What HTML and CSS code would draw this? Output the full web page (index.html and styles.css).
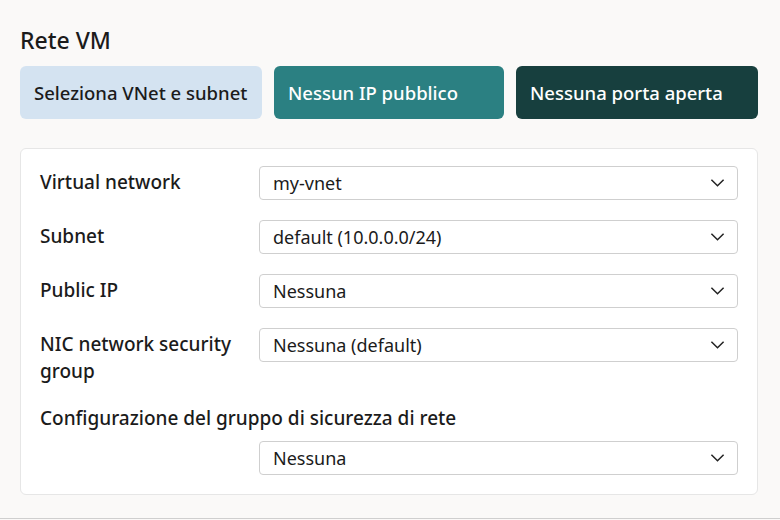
FILE: index.html
```html
<!DOCTYPE html>
<html lang="it">
<head>
    <meta charset="UTF-8">
    <meta name="viewport" content="width=device-width, initial-scale=1.0">
    <title>Rete VM</title>
    <link rel="stylesheet" href="styles.css">
</head>
<body>
    <div class="page">
        <h1 class="title">Rete VM</h1>

        <div class="steps">
            <div class="step step-light">Seleziona VNet e subnet</div>
            <div class="step step-teal">Nessun IP pubblico</div>
            <div class="step step-dark">Nessuna porta aperta</div>
        </div>

        <section class="card">
            <div class="row">
                <label class="label">Virtual network</label>
                <div class="select"><span>my-vnet</span><svg class="chevron" viewBox="0 0 16 10"><polyline points="1.5,1.5 8,8 14.5,1.5"/></svg></div>
            </div>
            <div class="row">
                <label class="label">Subnet</label>
                <div class="select"><span>default (10.0.0.0/24)</span><svg class="chevron" viewBox="0 0 16 10"><polyline points="1.5,1.5 8,8 14.5,1.5"/></svg></div>
            </div>
            <div class="row">
                <label class="label">Public IP</label>
                <div class="select"><span>Nessuna</span><svg class="chevron" viewBox="0 0 16 10"><polyline points="1.5,1.5 8,8 14.5,1.5"/></svg></div>
            </div>
            <div class="row">
                <label class="label">NIC network security group</label>
                <div class="select"><span>Nessuna (default)</span><svg class="chevron" viewBox="0 0 16 10"><polyline points="1.5,1.5 8,8 14.5,1.5"/></svg></div>
            </div>
            <div class="row-wide">
                <label class="label-wide">Configurazione del gruppo di sicurezza di rete</label>
                <div class="select select-indent"><span>Nessuna</span><svg class="chevron" viewBox="0 0 16 10"><polyline points="1.5,1.5 8,8 14.5,1.5"/></svg></div>
            </div>
        </section>
    </div>
</body>
</html>
```

FILE: styles.css
```css
body {
    margin: 0;
    background-color: #faf9f8;
    color: #1b1b1b;
    font-family: "Noto Sans", "Open Sans", sans-serif;
}
.page {
    height: 518px;
    padding: 0 22px 0 20px;
    border-bottom: 1px solid #cfcfcf;
}
.title {
    margin: 0;
    padding-top: 24px;
    font-size: 23px;
    font-weight: 500;
    line-height: 32px;
}
.steps {
    display: grid;
    grid-template-columns: 242fr 230fr 242fr;
    gap: 12px;
    margin-top: 10px;
}
.step {
    height: 53px;
    display: flex;
    align-items: center;
    padding: 0 14px;
    border-radius: 6px;
    font-size: 18.5px;
    font-weight: 500;
    white-space: nowrap;
}
.step-light {
    background-color: #d4e3f1;
    color: #1b1b1b;
}
.step-teal {
    background-color: #2b8082;
    color: #fff;
}
.step-dark {
    background-color: #173f3e;
    color: #fff;
}
.card {
    margin-top: 29px;
    background-color: #fff;
    border: 1px solid #e6e6e6;
    border-radius: 6px;
    padding: 17px 19px 19px;
    display: flex;
    flex-direction: column;
    gap: 20px;
}
.row {
    display: grid;
    grid-template-columns: 219px 1fr;
    align-items: start;
}
.label,
.label-wide {
    font-size: 19px;
    font-weight: 500;
    line-height: 27px;
}
.label {
    padding-top: 3px;
    padding-right: 20px;
}
.select {
    height: 34px;
    box-sizing: border-box;
    border: 1px solid #cfcfcf;
    border-radius: 4px;
    padding: 0 12px 0 13px;
    display: flex;
    align-items: center;
    justify-content: space-between;
    font-size: 18px;
}
.select-indent {
    margin-left: 219px;
    margin-top: 9px;
}
.chevron {
    width: 15px;
    height: 10px;
    fill: none;
    stroke: #222;
    stroke-width: 1.6;
}
```
